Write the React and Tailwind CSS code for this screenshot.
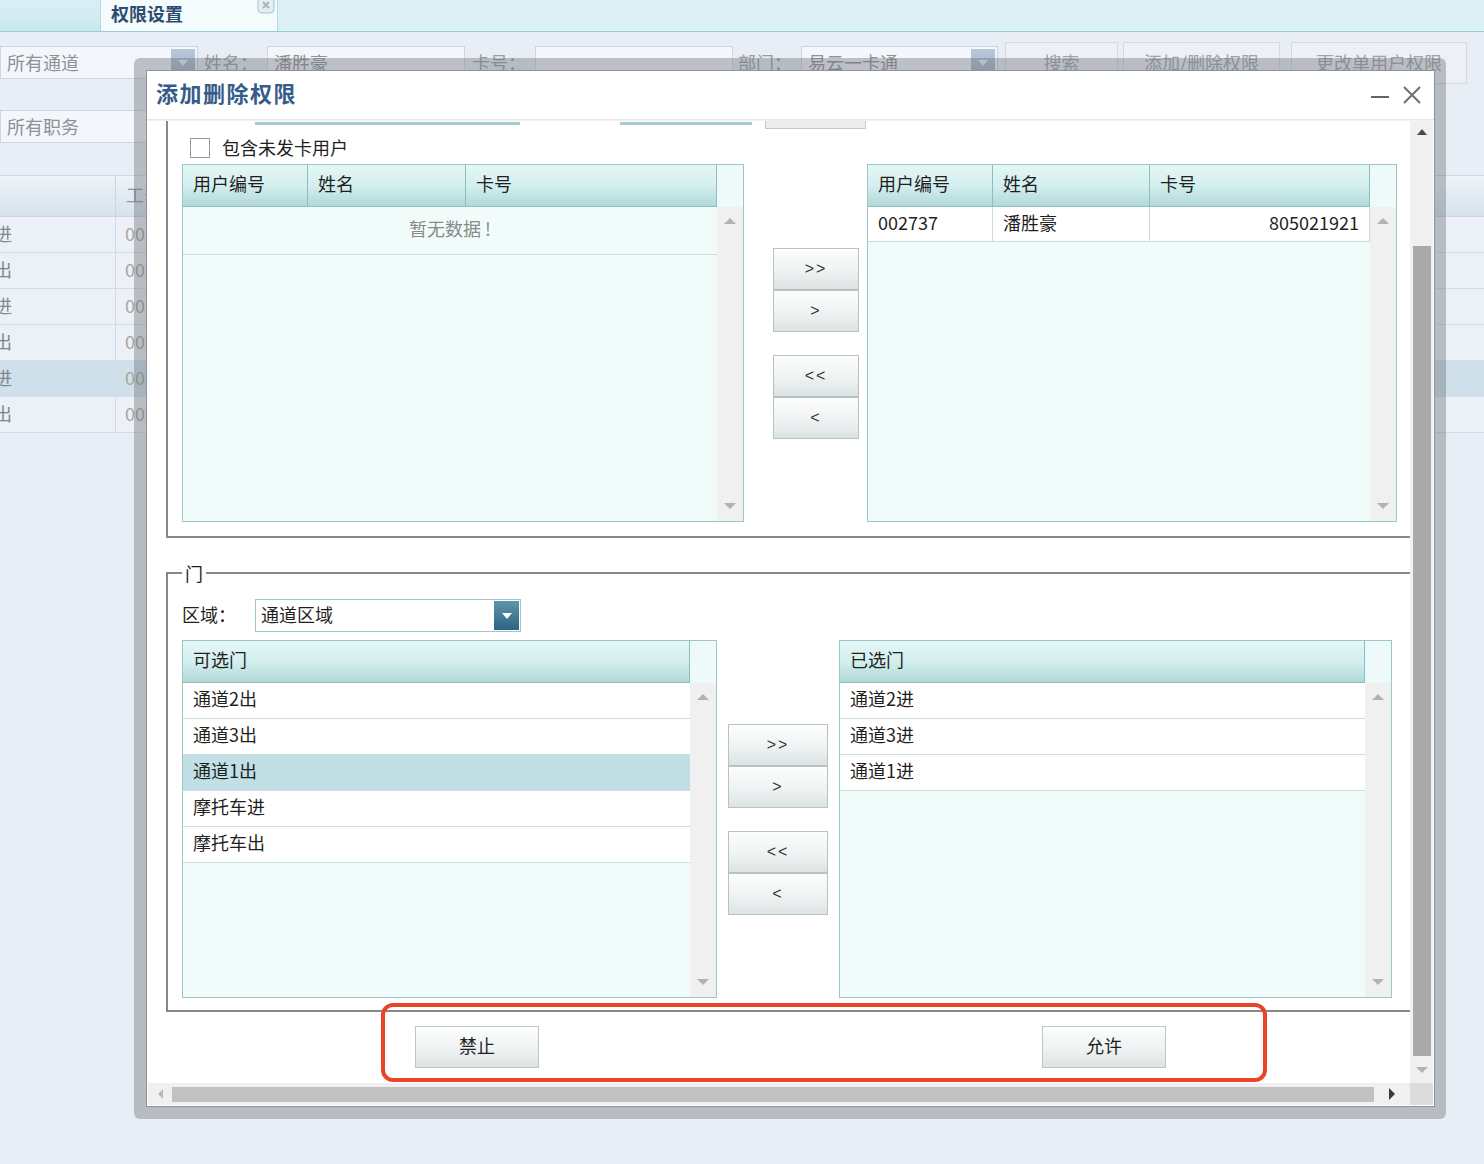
import React from "react";

const headGrad = "bg-gradient-to-b from-[#e4f7f6] via-[#d4efef] to-[#b1d8d8]";
const btnGrad = "bg-gradient-to-b from-[#fcfdfd] via-[#f1f4f4] to-[#dce3e3]";

function TriUp({ dark }) {
  return dark ? (
    <div className="w-0 h-0 border-x-[5px] border-x-transparent border-b-[6px] border-b-[#4a4a4a]" />
  ) : (
    <div className="w-0 h-0 border-x-[6px] border-x-transparent border-b-[6px] border-b-[#b2b2b2]" />
  );
}

function TriDown() {
  return <div className="w-0 h-0 border-x-[6px] border-x-transparent border-t-[6px] border-t-[#b2b2b2]" />;
}

function Table({ outer, cols, children }) {
  return (
    <div className={`${outer} h-[358px] shrink-0 border border-[#9cc6c8] bg-[#f0fbfa] flex flex-col`}>
      <div className="flex h-[42px] shrink-0">
        {cols.map((c) => (
          <div
            key={c.label}
            className={`${c.w} h-full flex items-center pl-[10px] pb-[4px] ${headGrad} border-r border-b border-[#8dbdbf] text-[#1f1f1f]`}
          >
            {c.label}
          </div>
        ))}
        <div className="flex-1 bg-[#eefaf9]" />
      </div>
      <div className="flex flex-1 min-h-0">
        <div className="flex-1 flex flex-col">{children}</div>
        <div className="w-[26px] bg-[#f0f0f0] flex flex-col items-center justify-between pt-[11px] pb-[12px]">
          <TriUp />
          <TriDown />
        </div>
      </div>
    </div>
  );
}

function ListRow({ text, selected }) {
  return (
    <div
      className={`h-[36px] flex items-center pl-[10px] pb-[4px] border-b border-[#c9dfdf] text-[#1f1f1f] ${
        selected ? "bg-[#c1e0e6]" : "bg-white"
      }`}
    >
      {text}
    </div>
  );
}

function MoveButtons({ w }) {
  const b = `${w} h-[42px] flex items-center justify-center border border-[#b9c2c2] ${btnGrad} text-[#333] text-[16px] tracking-[2px] font-['Liberation_Sans',sans-serif]`;
  return (
    <div className="flex flex-col">
      <div className={b}>&gt;&gt;</div>
      <div className={b}>&gt;</div>
      <div className={`${b} mt-[23px]`}>&lt;&lt;</div>
      <div className={b}>&lt;</div>
    </div>
  );
}

function FakeSelect({ w, text }) {
  return (
    <div className={`${w} h-[33px] flex items-center border border-[#cbd6e2] bg-[#f3f6fa] pl-[6px] pr-[2px] shrink-0`}>
      <span className="flex-1 text-[#8e9297]">{text}</span>
      <div className="w-[24px] h-[28px] bg-gradient-to-b from-[#b9c8d8] to-[#9fb1c4] flex items-center justify-center">
        <div className="w-0 h-0 border-x-[5px] border-x-transparent border-t-[6px] border-t-[#eef2f6]" />
      </div>
    </div>
  );
}

function Background() {
  const rows = [
    { t: "进", id: "002737" },
    { t: "出", id: "002737" },
    { t: "进", id: "002737" },
    { t: "出", id: "002737" },
    { t: "进", id: "002737", sel: true },
    { t: "出", id: "002737" },
  ];
  return (
    <div className="flex flex-col">
      <div className="flex h-[32px] bg-[#dcf0f4] border-b border-[#98cbd8]">
        <div className="w-[101px] bg-gradient-to-b from-[#d9f0f5] to-[#c9e7ef] border-r border-[#b5dce6]" />
        <div className="relative w-[177px] bg-[#f4fbfc] border-r border-[#b5dce6] pl-[10px] pb-[5px] flex items-center text-[#2c4c6e] font-bold">
          权限设置
          <svg className="absolute right-[2px] top-[-4px]" width="18" height="18" viewBox="0 0 18 18">
            <rect x="1" y="1" width="16" height="16" rx="4" fill="#e4eef3" stroke="#a9c1cd" />
            <path d="M6 6l6 6M12 6l-6 6" stroke="#9fb6c3" strokeWidth="2" />
          </svg>
        </div>
        <div className="flex-1" />
      </div>

      <div className="flex items-center h-[33px] mt-[14px]">
        <FakeSelect w="w-[198px]" text="所有通道" />
        <span className="w-[63px] ml-[6px] text-[#9a9ea3]">姓名：</span>
        <div className="w-[198px] h-[33px] border border-[#cbd6e2] bg-[#f3f6fa] pl-[6px] flex items-center text-[#8e9297]">潘胜豪</div>
        <span className="w-[63px] ml-[7px] text-[#9a9ea3]">卡号：</span>
        <div className="w-[198px] h-[33px] border border-[#cbd6e2] bg-[#f3f6fa]" />
        <span className="w-[63px] ml-[5px] text-[#9a9ea3]">部门：</span>
        <FakeSelect w="w-[197px]" text="易云一卡通" />
        <div className="w-[113px] h-[42px] ml-[7px] border border-[#d1d9e1] bg-[#edf1f6] flex items-center justify-center text-[#a0a4a9] shrink-0">搜索</div>
        <div className="w-[157px] h-[42px] ml-[5px] border border-[#d1d9e1] bg-[#edf1f6] flex items-center justify-center text-[#a0a4a9] shrink-0">添加/删除权限</div>
        <div className="w-[176px] h-[42px] ml-[11px] border border-[#d1d9e1] bg-[#edf1f6] flex items-center justify-center text-[#a0a4a9] shrink-0">更改单用户权限</div>
      </div>

      <div className="flex items-center h-[33px] mt-[31px]">
        <FakeSelect w="w-[198px]" text="所有职务" />
      </div>

      <div className="mt-[32px] border-t border-[#cdd8e2]">
        <div className="flex h-[41px] bg-gradient-to-b from-[#eef3f8] to-[#d6e2eb] border-b border-[#c9d5df]">
          <div className="w-[116px] border-r border-[#c9d5df]" />
          <div className="pl-[10px] pb-[3px] flex items-center text-[#8e969e]">工号</div>
        </div>
        {rows.map((r, i) => (
          <div
            key={i}
            className={`flex h-[36px] border-b border-[#d3dce6] ${r.sel ? "bg-[#cfe0ea]" : "bg-[#ecf0f7]"}`}
          >
            <div className="w-[116px] border-r border-[#d3dce6] flex items-center pb-[3px]">
              <span className="-ml-[6px] text-[#7d8891]">{r.t}</span>
            </div>
            <div className="pl-[9px] pb-[3px] flex items-center text-[#aaa59c]">{r.id}</div>
          </div>
        ))}
      </div>
    </div>
  );
}

function Dialog() {
  return (
    <div className="absolute left-[146px] top-[70px] w-[1289px] h-[1037px] bg-white border border-[#8f949b] flex flex-col">
      <div className="h-[48px] shrink-0 flex items-center pl-[9px] pr-[13px]">
        <span className="text-[22px] font-bold tracking-[1.5px] text-[#355c89] pb-[6px]">添加删除权限</span>
        <div className="ml-auto flex items-center gap-[14px]">
          <svg width="18" height="18" viewBox="0 0 18 18">
            <path d="M0 11h18" stroke="#666" strokeWidth="2" />
          </svg>
          <svg width="18" height="18" viewBox="0 0 18 18">
            <path d="M1 1l16 16M17 1L1 17" stroke="#707070" strokeWidth="2" />
          </svg>
        </div>
      </div>
      <div className="h-[2px] shrink-0 bg-gradient-to-b from-[#e2e2e2] to-[#f6f6f6]" />

      <div className="flex h-[962px] shrink-0 px-[1px]">
        <div className="w-[1262px] h-full overflow-hidden">
          <div className="w-[1400px] pl-[18px]">
            {/* first group, scrolled partly out of view */}
            <div className="h-[417px] border-l-2 border-b-2 border-[#878787] pl-[14px] flex flex-col">
              <div className="flex h-[8px]">
                <div className="ml-[73px] w-[265px] h-[3px] mt-[1px] bg-[#a7cbd1]" />
                <div className="ml-[100px] w-[132px] h-[3px] mt-[1px] bg-[#a7cbd1]" />
                <div className="ml-[13px] w-[101px] h-[8px] border border-t-0 border-[#c3caca] bg-[#ebeeee]" />
              </div>
              <div className="flex items-center h-[20px] mt-[9px]">
                <div className="w-[20px] h-[20px] ml-[8px] border border-[#9a9a9a] bg-white" />
                <span className="ml-[12px] text-[#1f1f1f] leading-none pb-[2px]">包含未发卡用户</span>
              </div>
              <div className="flex mt-[6px]">
                <Table
                  outer="w-[562px]"
                  cols={[
                    { label: "用户编号", w: "w-[125px]" },
                    { label: "姓名", w: "w-[158px]" },
                    { label: "卡号", w: "w-[251px]" },
                  ]}
                >
                  <div className="h-[48px] flex items-center justify-center pb-[4px] border-b border-[#c5dcdc] text-[#8a8a8a]">
                    暂无数据 !
                  </div>
                </Table>
                <div className="w-[123px] pl-[29px] pt-[84px]">
                  <MoveButtons w="w-[86px]" />
                </div>
                <Table
                  outer="w-[530px]"
                  cols={[
                    { label: "用户编号", w: "w-[125px]" },
                    { label: "姓名", w: "w-[157px]" },
                    { label: "卡号", w: "w-[220px]" },
                  ]}
                >
                  <div className="flex h-[35px] bg-white border-b border-[#c5dcdc] text-[#1f1f1f]">
                    <div className="w-[125px] border-r border-[#c5dcdc] pl-[10px] pb-[3px] flex items-center">002737</div>
                    <div className="w-[157px] border-r border-[#c5dcdc] pl-[10px] pb-[3px] flex items-center">潘胜豪</div>
                    <div className="w-[220px] border-r border-[#c5dcdc] pr-[10px] pb-[3px] flex items-center justify-end">805021921</div>
                  </div>
                </Table>
              </div>
            </div>

            {/* door group */}
            <fieldset className="mt-[23px] border-2 border-[#878787] pl-[14px] pt-[14px] pb-[12px]">
              <legend className="px-[3px] leading-[24px] text-[#1f1f1f]">门</legend>
              <div className="flex items-center h-[33px]">
                <span className="w-[73px] text-[#1f1f1f] pb-[2px]">区域：</span>
                <div className="w-[266px] h-[33px] border border-[#9cc6cb] bg-white flex items-center pl-[5px] pr-[1px]">
                  <span className="flex-1 text-[#1f1f1f] pb-[2px]">通道区域</span>
                  <div className="w-[25px] h-[29px] bg-gradient-to-b from-[#5d97ab] to-[#2b6480] flex items-center justify-center">
                    <div className="w-0 h-0 border-x-[5px] border-x-transparent border-t-[6px] border-t-white" />
                  </div>
                </div>
              </div>
              <div className="flex mt-[8px]">
                <Table outer="w-[535px]" cols={[{ label: "可选门", w: "w-[507px]" }]}>
                  <ListRow text="通道2出" />
                  <ListRow text="通道3出" />
                  <ListRow text="通道1出" selected />
                  <ListRow text="摩托车进" />
                  <ListRow text="摩托车出" />
                </Table>
                <div className="ml-[11px] pt-[84px]">
                  <MoveButtons w="w-[100px]" />
                </div>
                <div className="ml-[11px]">
                  <Table outer="w-[553px]" cols={[{ label: "已选门", w: "w-[525px]" }]}>
                    <ListRow text="通道2进" />
                    <ListRow text="通道3进" />
                    <ListRow text="通道1进" />
                  </Table>
                </div>
              </div>
            </fieldset>

            <div className="flex mt-[14px]">
              <div className={`ml-[249px] w-[124px] h-[42px] border border-[#bfc6c6] ${btnGrad} flex items-center justify-center pb-[3px] text-[#1f1f1f]`}>
                禁止
              </div>
              <div className={`ml-[503px] w-[124px] h-[42px] border border-[#bfc6c6] ${btnGrad} flex items-center justify-center pb-[3px] text-[#1f1f1f]`}>
                允许
              </div>
            </div>
          </div>
        </div>

        {/* vertical scrollbar */}
        <div className="w-[23px] h-full bg-[#f0f0f0] flex flex-col items-center">
          <div className="h-[22px] flex items-center justify-center">
            <TriUp dark />
          </div>
          <div className="h-[103px]" />
          <div className="w-[18px] h-[810px] bg-[#a9a9a9]" />
          <div className="h-[27px] flex items-center justify-center">
            <TriDown />
          </div>
        </div>
      </div>

      {/* horizontal scrollbar */}
      <div className="flex h-[22px] shrink-0 px-[1px]">
        <div className="w-[1262px] h-full bg-[#f0f0f0] flex items-center">
          <div className="w-[24px] flex justify-center">
            <div className="w-0 h-0 border-y-[5px] border-y-transparent border-r-[5px] border-r-[#b8b8b8]" />
          </div>
          <div className="w-[1202px] h-[15px] bg-[#c1c1c1]" />
          <div className="flex-1 flex justify-center">
            <div className="w-0 h-0 border-y-[6px] border-y-transparent border-l-[6px] border-l-[#3a3a3a]" />
          </div>
        </div>
        <div className="w-[23px] h-full bg-[#dcdcdc]" />
      </div>
    </div>
  );
}

export default function App() {
  return (
    <div className="relative w-[1484px] h-[1164px] overflow-hidden bg-[#e9eef6] text-[18px] font-['Noto_Sans_CJK_SC','Noto_Sans',sans-serif]">
      <Background />
      <div className="absolute left-[134px] top-[58px] w-[1312px] h-[1061px] rounded-[6px] bg-[#6b7078]/40" />
      <Dialog />
      <div className="absolute left-[381px] top-[1003px] w-[886px] h-[79px] rounded-[12px] border-[4px] border-[#e9432a]" />
    </div>
  );
}
